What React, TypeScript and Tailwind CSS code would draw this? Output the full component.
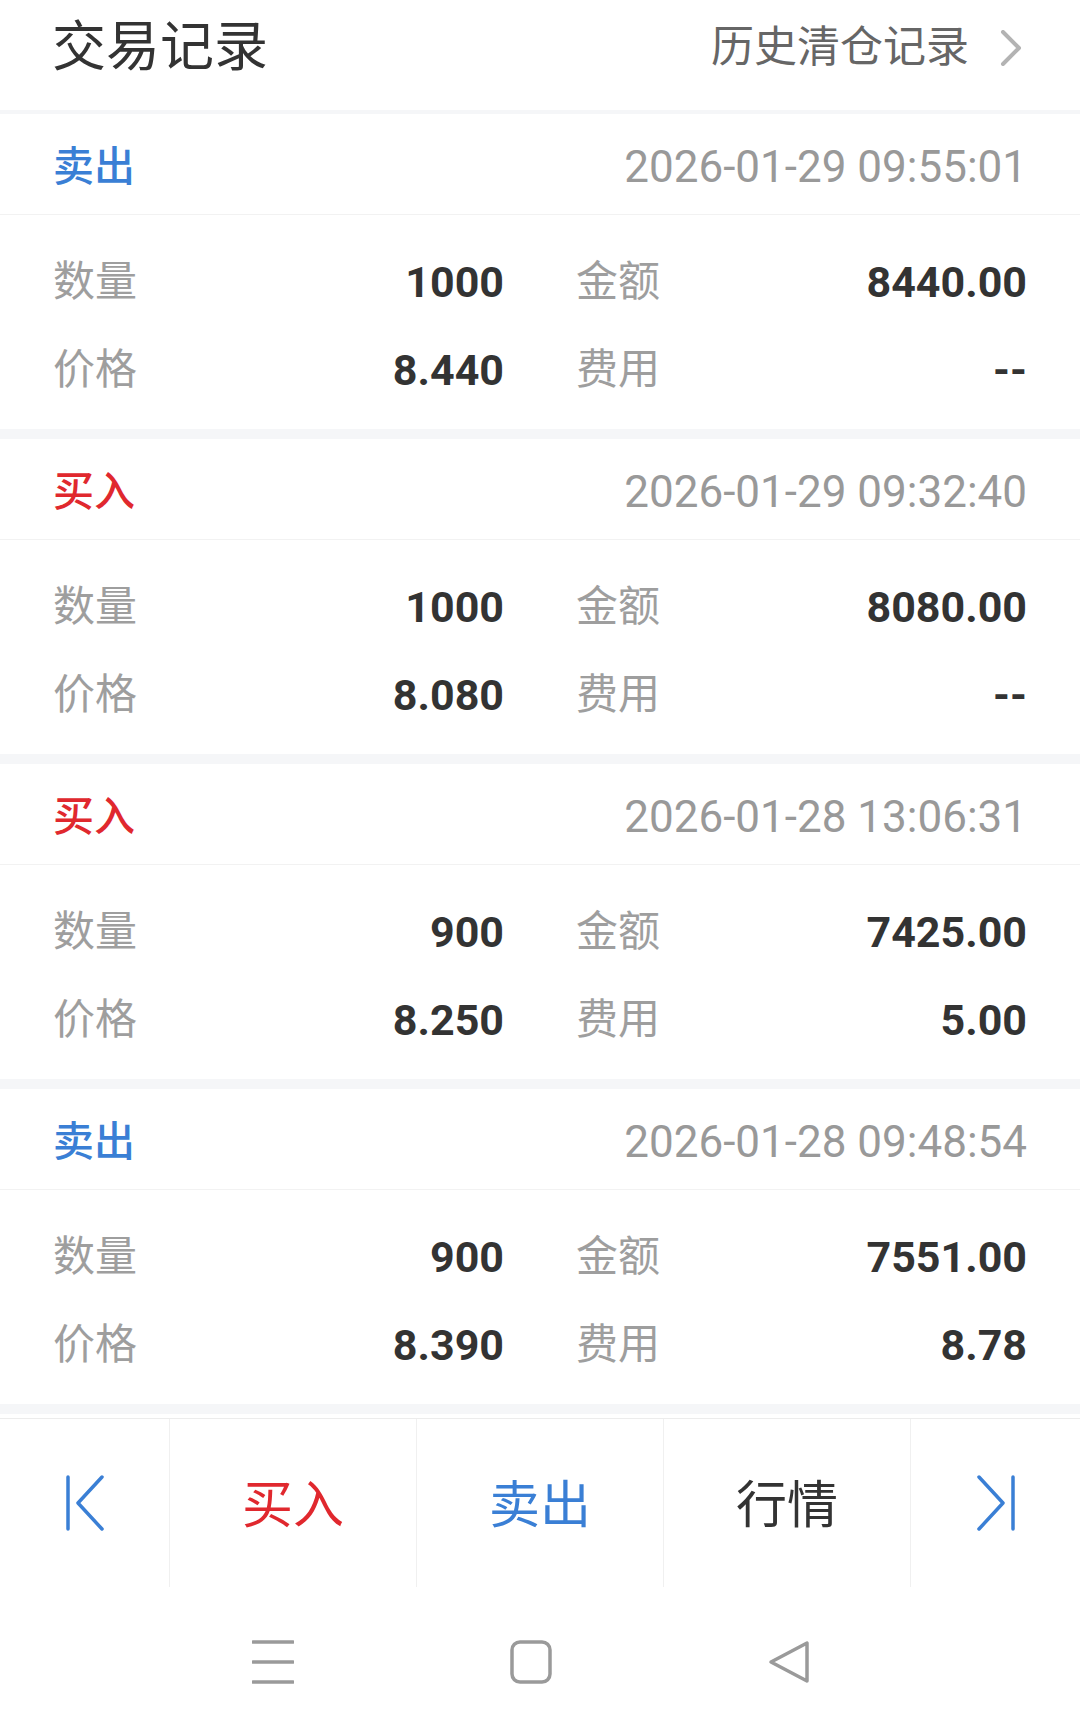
import React from 'react';

type Trade = {
  side: 'buy' | 'sell';
  time: string;
  qty: string;
  amount: string;
  price: string;
  fee: string;
};

const trades: Trade[] = [
  { side: 'sell', time: '2026-01-29 09:55:01', qty: '1000', amount: '8440.00', price: '8.440', fee: '--' },
  { side: 'buy', time: '2026-01-29 09:32:40', qty: '1000', amount: '8080.00', price: '8.080', fee: '--' },
  { side: 'buy', time: '2026-01-28 13:06:31', qty: '900', amount: '7425.00', price: '8.250', fee: '5.00' },
  { side: 'sell', time: '2026-01-28 09:48:54', qty: '900', amount: '7551.00', price: '8.390', fee: '8.78' },
];

const font = { fontFamily: 'Roboto, "Noto Sans CJK SC", sans-serif' };

const Field: React.FC<{ label: string; value: string }> = ({ label, value }) => (
  <div className="flex items-center justify-between h-[88px]">
    <span className="text-[42px] leading-none text-[#9e9e9e]">{label}</span>
    <span className="text-[43px] leading-none font-bold text-[#333]">{value}</span>
  </div>
);

const TradeCard: React.FC<{ t: Trade }> = ({ t }) => (
  <div className="bg-white h-[315px]">
    <div className="flex items-center justify-between h-[101px] pt-[6px] px-[53px] border-b border-[#f2f2f2]">
      <span
        className={
          t.side === 'buy'
            ? 'text-[41px] leading-none font-medium text-[#e0282e]'
            : 'text-[41px] leading-none font-medium text-[#3a7fd5]'
        }
      >
        {t.side === 'buy' ? '买入' : '卖出'}
      </span>
      <span className="text-[44px] leading-none text-[#999]">{t.time}</span>
    </div>
    <div className="grid grid-cols-2 gap-x-[72px] px-[53px] pt-[23px]">
      <Field label="数量" value={t.qty} />
      <Field label="金额" value={t.amount} />
      <Field label="价格" value={t.price} />
      <Field label="费用" value={t.fee} />
    </div>
  </div>
);

export default function App() {
  return (
    <div className="w-[1080px] h-[1736px] bg-white overflow-hidden flex flex-col" style={font}>
      {/* header */}
      <div className="h-[110px] flex items-start justify-between pl-[52px] pr-[58px]">
        <span className="mt-[21px] text-[54px] leading-[54px] text-[#333]">交易记录</span>
        <div className="mt-[26px] flex items-center gap-[31px]">
          <span className="text-[43px] leading-[43px] text-[#666]">历史清仓记录</span>
          <svg width="22" height="36" viewBox="0 0 22 36" fill="none">
            <path d="M3 2 L19 18 L3 34" stroke="#b3b3b3" strokeWidth="4" strokeLinecap="round" strokeLinejoin="round" />
          </svg>
        </div>
      </div>
      <div className="h-[4px] bg-[#f5f6f8]" />

      {/* list */}
      <div className="flex flex-col">
        {trades.map((t, i) => (
          <React.Fragment key={i}>
            {i > 0 && <div className="h-[10px] bg-[#f5f6f8]" />}
            <TradeCard t={t} />
          </React.Fragment>
        ))}
      </div>
      <div className="h-[10px] bg-[#f5f6f8]" />
      <div className="h-[4px]" />

      {/* toolbar */}
      <div className="h-[169px] flex border-t border-[#ececec]">
        <div className="w-[169px] flex items-center justify-center">
          <svg width="40" height="56" viewBox="0 0 40 56" fill="none">
            <path d="M3 2 V54" stroke="#3a7fd5" strokeWidth="3.5" strokeLinecap="round" />
            <path d="M37 2 L13 28 L37 54" stroke="#3a7fd5" strokeWidth="3.5" strokeLinecap="round" strokeLinejoin="round" />
          </svg>
        </div>
        <div className="w-[247px] flex items-center justify-center pt-[4px] border-l border-[#f0f0f0] text-[51px] leading-none text-[#e0282e]">
          买入
        </div>
        <div className="w-[247px] flex items-center justify-center pt-[4px] border-l border-[#f0f0f0] text-[51px] leading-none text-[#3a7fd5]">
          卖出
        </div>
        <div className="w-[247px] flex items-center justify-center pt-[4px] border-l border-[#f0f0f0] text-[51px] leading-none text-[#333]">
          行情
        </div>
        <div className="flex-1 flex items-center justify-center border-l border-[#f0f0f0]">
          <svg width="40" height="56" viewBox="0 0 40 56" fill="none">
            <path d="M3 2 L27 28 L3 54" stroke="#3a7fd5" strokeWidth="3.5" strokeLinecap="round" strokeLinejoin="round" />
            <path d="M37 2 V54" stroke="#3a7fd5" strokeWidth="3.5" strokeLinecap="round" />
          </svg>
        </div>
      </div>

      {/* system nav */}
      <div className="flex-1 flex items-center pl-[144px]">
        <div className="w-[258px] flex justify-center">
          <svg width="42" height="44" viewBox="0 0 42 44" fill="none">
            <path d="M1 2 H41 M1 22 H41 M1 42 H41" stroke="#9a9a9a" strokeWidth="3.5" strokeLinecap="round" />
          </svg>
        </div>
        <div className="w-[258px] flex justify-center">
          <svg width="42" height="44" viewBox="0 0 42 44" fill="none">
            <rect x="2" y="2" width="38" height="40" rx="8" stroke="#9a9a9a" strokeWidth="3.5" />
          </svg>
        </div>
        <div className="w-[258px] flex justify-center">
          <svg width="44" height="44" viewBox="0 0 44 44" fill="none">
            <path d="M40 3 L40 41 L4 22 Z" stroke="#9a9a9a" strokeWidth="3.5" strokeLinejoin="round" />
          </svg>
        </div>
      </div>
    </div>
  );
}
